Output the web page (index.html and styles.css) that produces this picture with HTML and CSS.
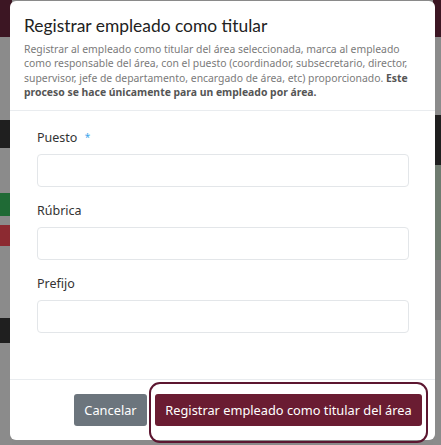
FILE: index.html
```html
<!DOCTYPE html>
<html lang="es">
<head>
<meta charset="utf-8">
<link rel="stylesheet" href="styles.css">
</head>
<body>
<div class="backdrop">
  <div class="side side-left">
    <div class="band maroon h37"></div>
    <div class="band gray h83"></div>
    <div class="band dark h28"></div>
    <div class="band gray h45"></div>
    <div class="band green h23"></div>
    <div class="band gray h9"></div>
    <div class="band red h21"></div>
    <div class="band gray h72"></div>
    <div class="band dark h25"></div>
    <div class="band gray fill"></div>
  </div>
  <div class="center"></div>
  <div class="side side-right">
    <div class="band maroon h37"></div>
    <div class="band gray h78"></div>
    <div class="band dark h50"></div>
    <div class="band greengray h95"></div>
    <div class="band gray2 h60"></div>
    <div class="band gray fill"></div>
  </div>
</div>

<div class="modal">
  <div class="modal-header">
    <h5 class="modal-title">Registrar empleado como titular</h5>
    <p class="modal-desc"><span>Registrar al empleado como titular del área seleccionada, marca al empleado como responsable del área, con el puesto (coordinador, subsecretario, director,</span> <span>supervisor, jefe de departamento, encargado de área, etc) proporcionado.</span> <strong>Este</strong> <strong>proceso se hace únicamente para un empleado por área.</strong></p>
  </div>
  <div class="modal-body">
    <div class="form-group">
      <label class="form-label">Puesto <span class="req">*</span></label>
      <div class="form-input"></div>
    </div>
    <div class="form-group">
      <label class="form-label">Rúbrica</label>
      <div class="form-input"></div>
    </div>
    <div class="form-group">
      <label class="form-label">Prefijo</label>
      <div class="form-input"></div>
    </div>
  </div>
  <div class="modal-footer">
    <button class="btn btn-secondary">Cancelar</button>
    <button class="btn btn-primary">Registrar empleado como titular del área</button>
  </div>
</div>
<div class="focus-ring"></div>
</body>
</html>
```

FILE: styles.css
```css
html, body {
  margin: 0;
  padding: 0;
  width: 441px;
  height: 445px;
  overflow: hidden;
  font-family: "Noto Sans", "Open Sans", sans-serif;
}

.backdrop {
  display: flex;
  width: 441px;
  height: 445px;
  background: #8a8a8a;
}

.side {
  display: flex;
  flex-direction: column;
}
.side-left { width: 12px; }
.side-right { width: 8px; }
.center { flex: 1; background: #8a8a8a; }

.band { width: 100%; }
.maroon { background: #3c1623; }
.gray { background: #8b8b8b; }
.gray2 { background: #7d7d7d; }
.dark { background: #1f1f1f; }
.green { background: #1f6a35; }
.greengray { background: #6f7b70; }
.red { background: #8c2a31; }
.fill { flex: 1; }
.h9 { height: 9px; }
.h21 { height: 21px; }
.h23 { height: 23px; }
.h25 { height: 25px; }
.h28 { height: 28px; }
.h37 { height: 37px; }
.h45 { height: 45px; }
.h50 { height: 50px; }
.h60 { height: 60px; }
.h72 { height: 72px; }
.h78 { height: 78px; }
.h83 { height: 83px; }
.h95 { height: 95px; }

.modal {
  position: absolute;
  left: 10px;
  top: 1px;
  width: 425px;
  height: 439px;
  background: #fff;
  border-radius: 6px;
  display: flex;
  flex-direction: column;
  box-sizing: border-box;
  overflow: hidden;
}

.modal-header {
  padding: 12px 14px 11px;
  border-bottom: 1px solid #e9ecef;
}
.modal-title {
  margin: 0;
  font-family: Lato, "Noto Sans", sans-serif;
  font-size: 17.4px;
  line-height: 26px;
  font-weight: 400;
  color: #222;
}
.modal-desc {
  margin: 3px 0 0;
  font-size: 10.4px;
  line-height: 14.3px;
  color: #7a7a7a;
}
.modal-desc strong {
  color: #555;
  font-weight: 700;
}

.modal-body {
  padding: 16px 26px 0 27px;
  flex: 1;
}
.form-group {
  margin-bottom: 14px;
}
.form-label {
  display: block;
  font-size: 12.5px;
  line-height: 20px;
  color: #333;
  margin-bottom: 6px;
}
.req {
  color: #3ea6ec;
  font-size: 10px;
  margin-left: 4px;
  vertical-align: 1px;
}
.form-input {
  height: 33px;
  border: 1px solid #e3e6e9;
  border-radius: 4px;
  box-sizing: border-box;
  background: #fff;
}

.modal-footer {
  border-top: 1px solid #e9ecef;
  padding: 14px 13px 14px;
  display: flex;
  justify-content: flex-end;
  gap: 8px;
}
.btn {
  height: 32px;
  border: none;
  border-radius: 3px;
  font-family: "Noto Sans", "Open Sans", sans-serif;
  font-size: 12.8px;
  color: #fff;
  padding: 0 10px;
  line-height: 32px;
  white-space: nowrap;
}
.btn-secondary {
  background: #6c757d;
  width: 73px;
}
.btn-primary {
  background: #6a1c32;
  width: 267px;
}

.focus-ring {
  position: absolute;
  left: 149px;
  top: 382px;
  width: 279px;
  height: 61px;
  box-sizing: border-box;
  border: 2px solid #5c1630;
  border-radius: 11px;
}
```
